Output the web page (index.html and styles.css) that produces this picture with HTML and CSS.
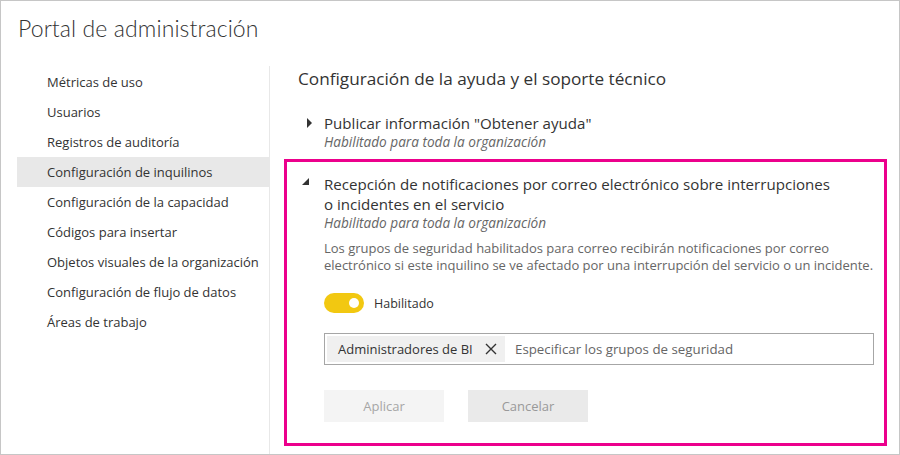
FILE: index.html
```html
<!DOCTYPE html>
<html lang="es">
<head>
<meta charset="utf-8">
<title>Portal de administración</title>
<link rel="stylesheet" href="styles.css">
</head>
<body>
<div class="frame">
  <header class="header">
    <h1 class="title">Portal de administración</h1>
  </header>
  <div class="body">
    <nav class="sidebar">
      <div class="nav-item">Métricas de uso</div>
      <div class="nav-item">Usuarios</div>
      <div class="nav-item">Registros de auditoría</div>
      <div class="nav-item selected">Configuración de inquilinos</div>
      <div class="nav-item">Configuración de la capacidad</div>
      <div class="nav-item">Códigos para insertar</div>
      <div class="nav-item">Objetos visuales de la organización</div>
      <div class="nav-item">Configuración de flujo de datos</div>
      <div class="nav-item">Áreas de trabajo</div>
    </nav>
    <main class="main">
      <h2 class="section-title">Configuración de la ayuda y el soporte técnico</h2>
      <div class="setting collapsed">
        <div class="caret-col"><span class="caret-right"></span></div>
        <div class="setting-text">
          <div class="setting-name">Publicar información "Obtener ayuda"</div>
          <div class="setting-status">Habilitado para toda la organización</div>
        </div>
      </div>
      <div class="setting expanded">
        <div class="caret-col"><span class="caret-down"></span></div>
        <div class="setting-text">
          <div class="setting-name">Recepción de notificaciones por correo electrónico sobre interrupciones<br>o incidentes en el servicio</div>
          <div class="setting-status">Habilitado para toda la organización</div>
          <p class="desc">Los grupos de seguridad habilitados para correo recibirán notificaciones por correo<br>electrónico si este inquilino se ve afectado por una interrupción del servicio o un incidente.</p>
          <div class="toggle-row">
            <span class="toggle"><span class="knob"></span></span>
            <span class="toggle-label">Habilitado</span>
          </div>
          <div class="picker">
            <span class="chip">Administradores de BI
              <svg class="chip-x" width="12" height="12" viewBox="0 0 12 12"><path d="M1 1 L11 11 M11 1 L1 11" stroke="#333" stroke-width="1.4" fill="none"/></svg>
            </span>
            <span class="placeholder">Especificar los grupos de seguridad</span>
          </div>
          <div class="buttons">
            <button class="btn apply">Aplicar</button>
            <button class="btn cancel">Cancelar</button>
          </div>
        </div>
      </div>
    </main>
  </div>
</div>
</body>
</html>
```
FILE: styles.css
```css
* { box-sizing: border-box; }
html, body { margin: 0; padding: 0; background: #fff; }
body { font-family: "Segoe UI", "Open Sans", "Noto Sans", sans-serif; color: #333; }

.frame {
  width: 900px;
  height: 455px;
  border: 1px solid #c6c6c6;
  display: flex;
  flex-direction: column;
  overflow: hidden;
}

.header { height: 65px; padding: 10px 0 0 17px; }
.title {
  margin: 0;
  font-family: "Lato", "Open Sans", sans-serif;
  font-size: 23px;
  font-weight: 300;
  line-height: 34px;
  color: #333;
  letter-spacing: 0.1px;
}

.body { flex: 1; display: flex; }

.sidebar {
  width: 269px;
  border-right: 1px solid #e8e8e8;
  padding-top: 1px;
}
.nav-item {
  margin-left: 16px;
  height: 30px;
  line-height: 30px;
  padding-left: 30px;
  font-size: 13px;
  color: #333;
  white-space: nowrap;
}
.nav-item.selected { background: #e8e8e8; }

.main { flex: 1; padding: 0 0 0 28px; }

.section-title {
  margin: 0;
  font-size: 17.2px;
  font-weight: 400;
  line-height: 26px;
  color: #333;
}

.setting { display: flex; }
.caret-col { width: 26px; flex: none; }
.collapsed { margin-top: 21px; }
.collapsed .caret-col { padding: 5px 0 0 9px; }
.caret-right {
  display: block;
  width: 0; height: 0;
  border-left: 5px solid #333;
  border-top: 5px solid transparent;
  border-bottom: 5px solid transparent;
}

.setting-name { font-size: 15.1px; line-height: 20px; color: #333; }
.setting-status { font-size: 13.6px; font-style: italic; line-height: 18px; color: #666; }

.expanded {
  margin: 8px 0 0 -14px;
  width: 603px;
  height: 287px;
  border: 3px solid #ec008c;
  padding: 12px 0 0 0;
}
.expanded .caret-col { width: 37px; padding: 4px 0 0 15px; }
.caret-down {
  display: block;
  width: 0; height: 0;
  border-bottom: 7px solid #333;
  border-left: 7px solid transparent;
}

.desc {
  margin: 8px 0 0 0;
  font-size: 13px;
  line-height: 17px;
  color: #666;
  white-space: nowrap;
}

.toggle-row { display: flex; align-items: center; margin-top: 19px; height: 20px; }
.toggle {
  width: 40px; height: 20px;
  border-radius: 10px;
  background: #f2c811;
  display: flex;
  align-items: center;
  justify-content: flex-end;
  padding-right: 5px;
}
.knob { width: 10px; height: 10px; border-radius: 50%; background: #fff; }
.toggle-label { margin-left: 10px; font-size: 12.5px; color: #333; }

.picker {
  margin-top: 20px;
  width: 550px;
  height: 32px;
  border: 1px solid #a6a6a6;
  display: flex;
  align-items: center;
  padding: 2px;
}
.chip {
  height: 26px;
  width: 178px;
  background: #f0f0f0;
  display: flex;
  align-items: center;
  padding-left: 11px;
  font-size: 13px;
  color: #333;
  white-space: nowrap;
}
.chip-x { margin-left: 12px; }
.placeholder { margin-left: 10px; font-size: 13.3px; color: #666; white-space: nowrap; }

.buttons { display: flex; gap: 24px; margin-top: 25px; }
.btn {
  width: 120px;
  height: 32px;
  border: none;
  font-family: inherit;
  font-size: 13px;
  padding: 0;
}
.btn.apply { background: #f4f4f4; color: #a6a6a6; }
.btn.cancel { background: #eaeaea; color: #999; }
```
